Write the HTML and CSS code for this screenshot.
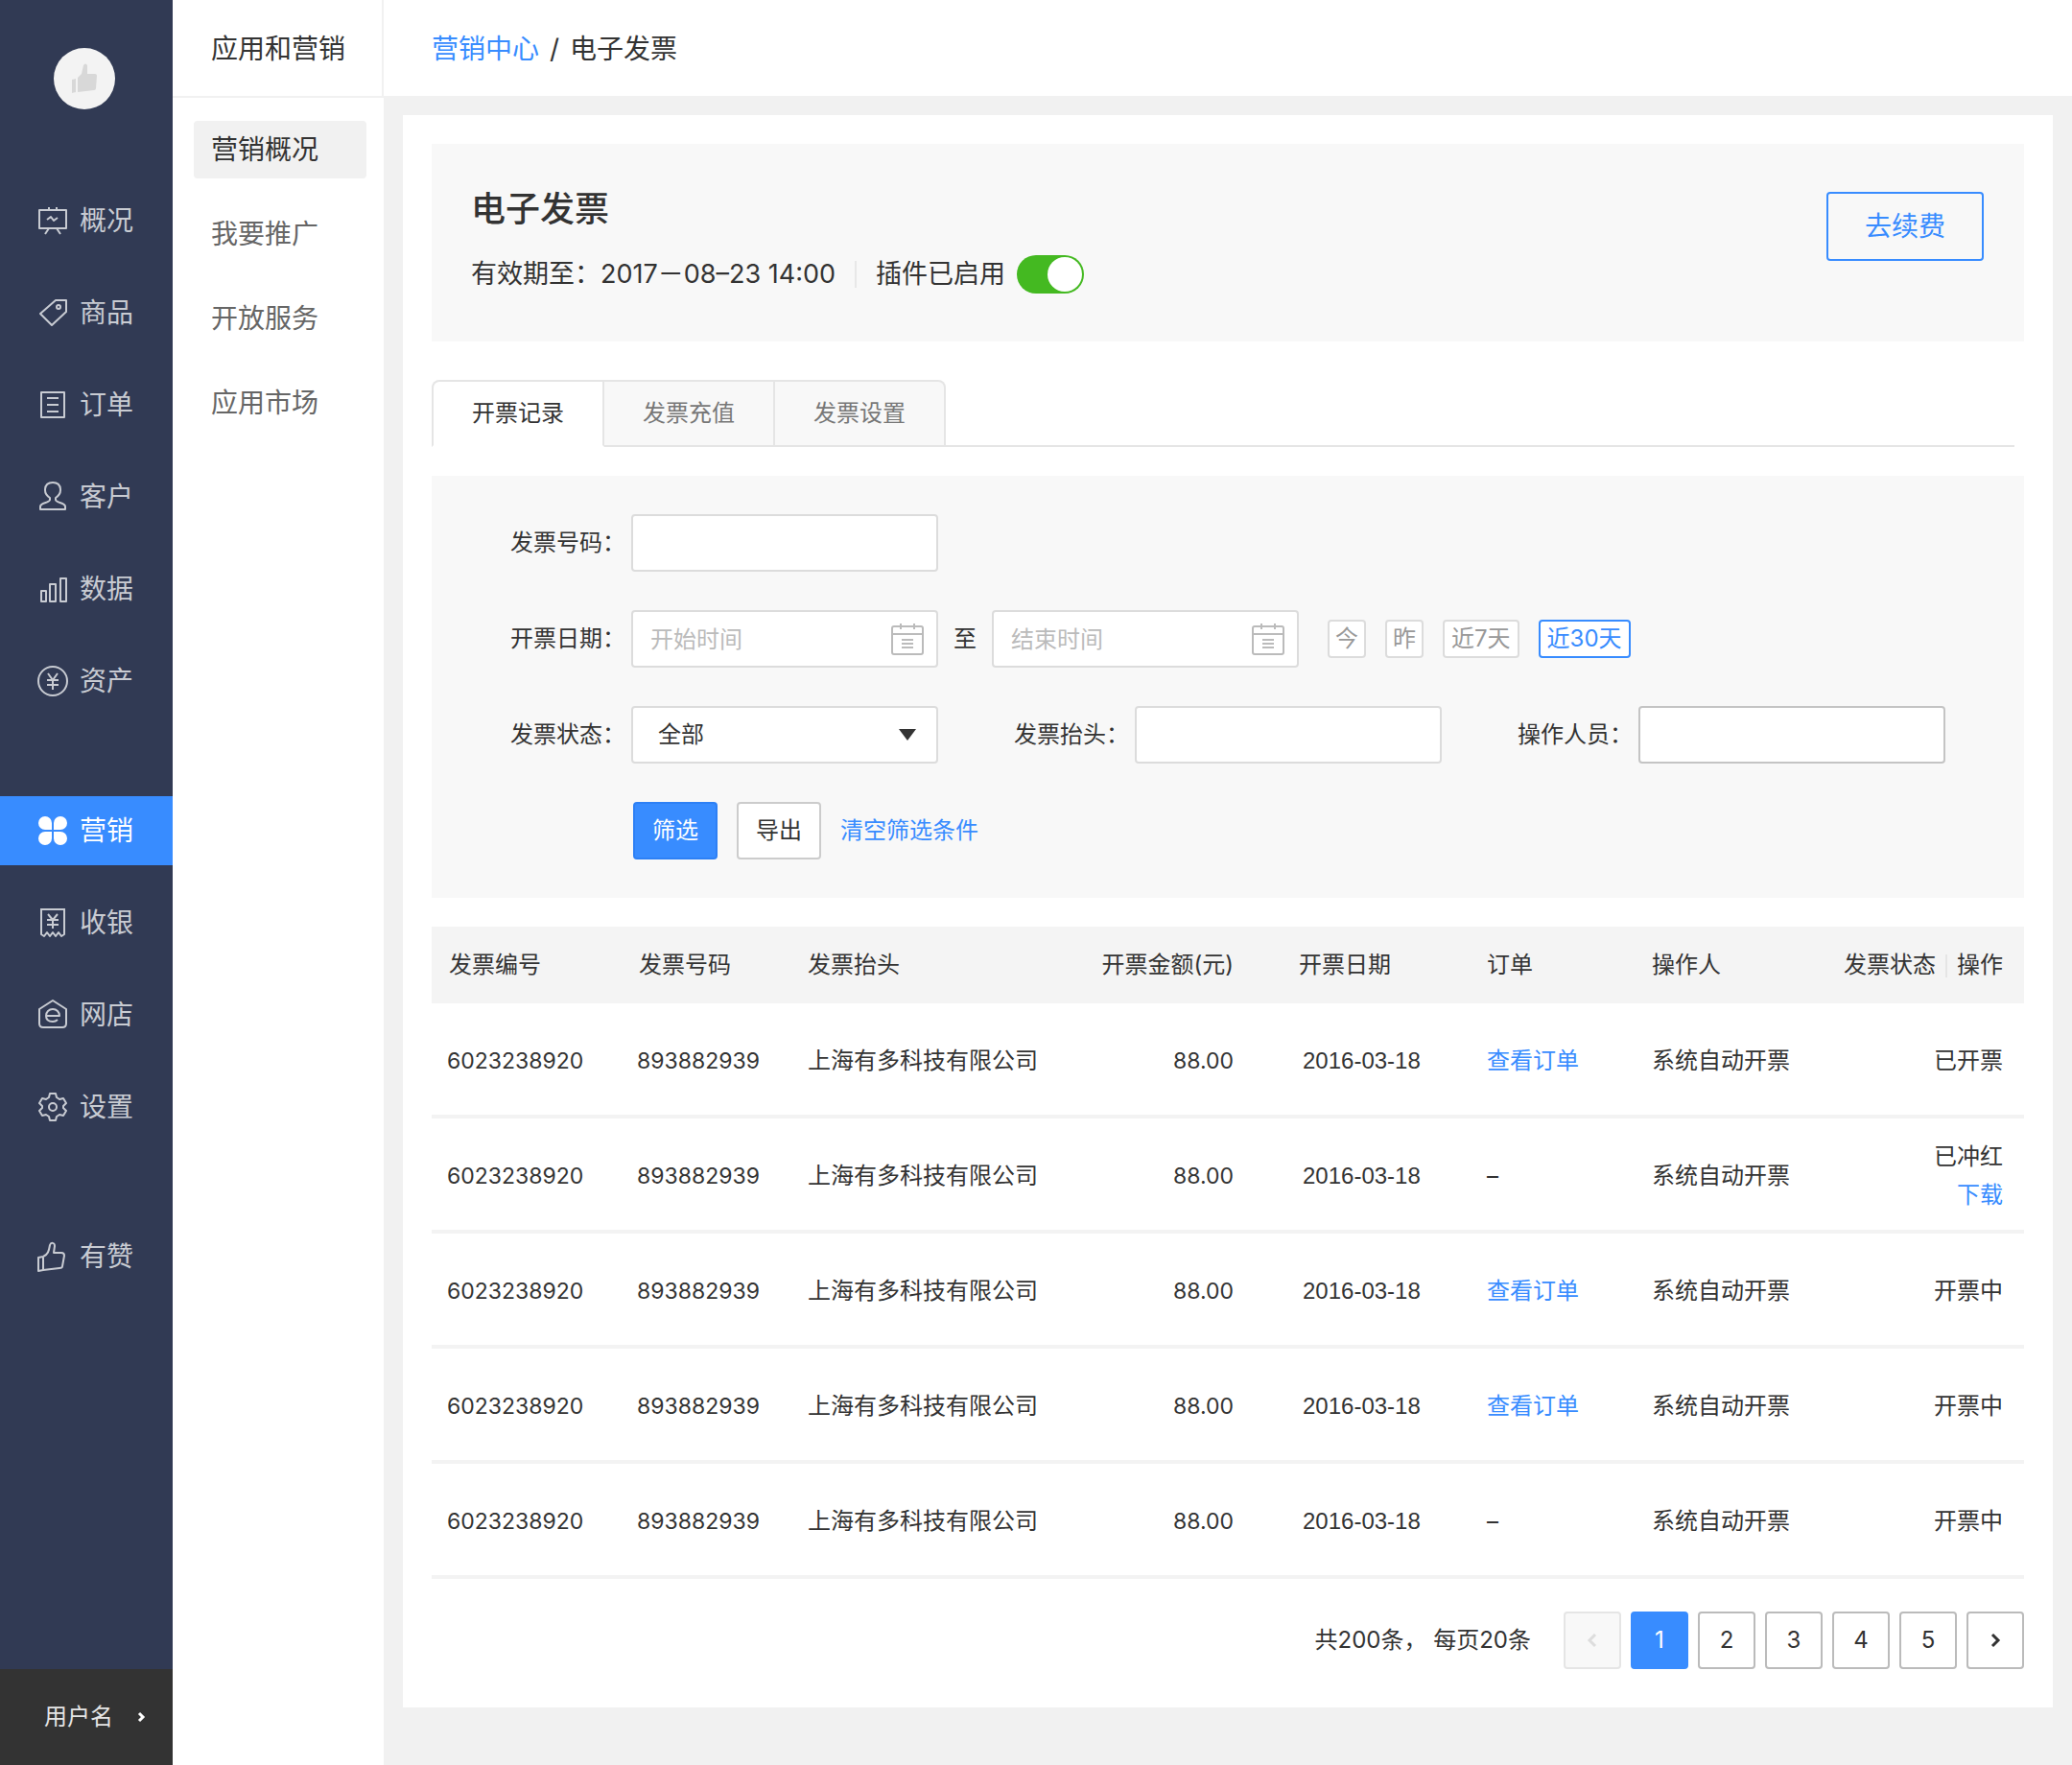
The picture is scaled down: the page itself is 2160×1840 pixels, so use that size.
FILE: index.html
```html
<!DOCTYPE html>
<html lang="zh-CN">
<head>
  <meta charset="UTF-8" />
  <meta name="viewport" content="width=device-width, initial-scale=1.0"/>
  <title>电子发票</title>
  <link rel="stylesheet" href="styles.css">
</head>
<body>
  <div class="layout">
    <aside class="sidebar">
      <div class="logo">
        <svg width="32" height="36" viewBox="0 0 32 36" fill="#d8d8d8">
          <path d="M3 19l4-1v14l-4 1z"/>
          <path d="M9 17l4-4 2-9q2-3 4 0v9h8q2 0 2 2l-1 13q0 2-2 2L9 32z"/>
        </svg>
      </div>
      <nav class="nav">
        <a href="#">
          <svg class="icon" viewBox="0 0 32 32"><path d="M2 5h28v19H2zM12 5V2M20 5V2M12 24l-4 6M20 24l4 6M10 15l4-3 3 4 4-3"/></svg>
          概况
        </a>
        <a href="#">
          <svg class="icon" viewBox="0 0 32 32"><path d="M19 3h11v12L15 29 3 17z"/><circle cx="22" cy="10" r="2"/></svg>
          商品
        </a>
        <a href="#">
          <svg class="icon" viewBox="0 0 32 32"><path d="M4 3h24v26H4zM10 9h12M10 16h12M10 23h12"/></svg>
          订单
        </a>
        <a href="#">
          <svg class="icon" viewBox="0 0 32 32"><path d="M13 19v-2c-3-2-5-5-5-8 0-5 3-8 8-8s8 3 8 8c0 3-2 6-5 8v2c0 3 10 3 10 7v3H3v-3c0-4 10-4 10-7z"/></svg>
          客户
        </a>
        <a href="#">
          <svg class="icon" viewBox="0 0 32 32"><path d="M4 18h5v11H4zM13 11h6v18h-6zM24 5h6v24h-6z"/></svg>
          数据
        </a>
        <a href="#">
          <svg class="icon" viewBox="0 0 32 32"><circle cx="16" cy="16" r="15"/><path d="M11 8l5 7 5-7M10 15h12M10 20h12M16 15v10"/></svg>
          资产
        </a>
        <a href="#" class="active group-start">
          <svg class="icon icon-solid" viewBox="0 0 32 32"><path d="M15 15H8a7 7 0 1 1 7-7zM17 15V8a7 7 0 1 1 7 7zM15 17v7a7 7 0 1 1-7-7zM17 17h7a7 7 0 1 1-7 7z"/></svg>
          营销
        </a>
        <a href="#">
          <svg class="icon" viewBox="0 0 32 32"><path d="M3 2h26M4 2v26l3 2 3-4 3 4 3-4 3 4 3-4 3 4 3-2V2M11 7l5 6 5-6M10 13h12M10 18h12M16 13v9"/></svg>
          收银
        </a>
        <a href="#">
          <svg class="icon" viewBox="0 0 32 32"><path d="M16 1l14 9v15q0 4-4 4H6q-4 0-4-4V10z"/><path d="M10 17h13c0-4-3-7-7-7s-7 3-7 7 3 6 7 6c3 0 4-1 5-2"/></svg>
          网店
        </a>
        <a href="#">
          <svg class="icon" viewBox="0 0 32 32"><circle cx="16" cy="16" r="4"/><path d="M13 2h6l1 4 3 2 4-1 3 5-3 3v2l3 3-3 5-4-1-3 2-1 4h-6l-1-4-3-2-4 1-3-5 3-3v-2l-3-3 3-5 4 1 3-2z"/></svg>
          设置
        </a>
        <a href="#" class="group-start">
          <svg class="icon" viewBox="0 0 32 32"><path d="M1 17l5-1v14l-5 1zM6 16c5-2 6-6 7-12 1-3 5-3 5 1l-1 7h8q3 0 3 3l-2 11q0 2-3 2L6 30"/></svg>
          有赞
        </a>
      </nav>
      <a href="#" class="user">
        用户名
        <svg width="10" height="12" viewBox="0 0 10 12"><path d="M3 2l4 4-4 4"/></svg>
      </a>
    </aside>

    <aside class="submenu">
      <div class="submenu-title">应用和营销</div>
      <nav class="submenu-list">
        <a href="#" class="active">营销概况</a>
        <a href="#">我要推广</a>
        <a href="#">开放服务</a>
        <a href="#">应用市场</a>
      </nav>
    </aside>

    <div class="content">
      <header class="topbar">
        <a href="#">营销中心</a><span class="slash">/</span><span>电子发票</span>
      </header>

      <main class="card">
        <section class="banner">
          <div>
            <h1>电子发票</h1>
            <div class="banner-info">
              <span>有效期至：2017－08–23 14:00</span>
              <label class="plugin">
                插件已启用
                <input type="checkbox" class="switch" checked />
              </label>
            </div>
          </div>
          <button type="button" class="btn-renew">去续费</button>
        </section>

        <div class="tabs">
          <button type="button" class="active">开票记录</button>
          <button type="button">发票充值</button>
          <button type="button">发票设置</button>
        </div>

        <form class="filter">
          <div class="row">
            <div class="field">
              <label for="number">发票号码：</label>
              <input type="text" id="number" />
            </div>
          </div>
          <div class="row dates">
            <div class="field">
              <label for="start">开票日期：</label>
              <div class="date">
                <input type="text" id="start" placeholder="开始时间" />
                <svg viewBox="0 0 34 34"><path d="M3 4h28q2 0 2 2v25q0 2-2 2H3q-2 0-2-2V6q0-2 2-2zM1 12h32M10 1v6M24 1v6M11 18h12M11 22h12M11 26h12"/></svg>
              </div>
              <label for="end" class="to">至</label>
              <div class="date">
                <input type="text" id="end" placeholder="结束时间" />
                <svg viewBox="0 0 34 34"><path d="M3 4h28q2 0 2 2v25q0 2-2 2H3q-2 0-2-2V6q0-2 2-2zM1 12h32M10 1v6M24 1v6M11 18h12M11 22h12M11 26h12"/></svg>
              </div>
            </div>
            <div class="quick">
              <button type="button">今</button>
              <button type="button">昨</button>
              <button type="button" class="wide">近7天</button>
              <button type="button" class="wide active">近30天</button>
            </div>
          </div>
          <div class="row">
            <div class="field">
              <label for="status">发票状态：</label>
              <div class="select">
                <select id="status">
                  <option>全部</option>
                  <option>已开票</option>
                  <option>已冲红</option>
                  <option>开票中</option>
                </select>
                <svg viewBox="0 0 20 14"><path d="M1 1h18l-9 12z"/></svg>
              </div>
            </div>
            <div class="field">
              <label for="title">发票抬头：</label>
              <input type="text" id="title" />
            </div>
            <div class="field">
              <label for="operator">操作人员：</label>
              <input type="text" id="operator" class="dark" />
            </div>
          </div>
          <div class="row actions">
            <button type="submit" class="btn primary">筛选</button>
            <button type="button" class="btn">导出</button>
            <a href="#">清空筛选条件</a>
          </div>
        </form>

        <table class="records">
          <thead>
            <tr>
              <th class="c-id">发票编号</th>
              <th class="c-number">发票号码</th>
              <th>发票抬头</th>
              <th class="c-amount">开票金额(元)</th>
              <th class="c-date">开票日期</th>
              <th class="c-order">订单</th>
              <th class="c-operator">操作人</th>
              <th class="c-status">发票状态<span class="sep"></span>操作</th>
            </tr>
          </thead>
          <tbody>
            <tr>
              <td class="c-id">6023238920</td>
              <td class="c-number">893882939</td>
              <td>上海有多科技有限公司</td>
              <td class="c-amount">88.00</td>
              <td class="c-date">2016-03-18</td>
              <td><a href="#">查看订单</a></td>
              <td>系统自动开票</td>
              <td class="c-status">已开票</td>
            </tr>
            <tr>
              <td class="c-id">6023238920</td>
              <td class="c-number">893882939</td>
              <td>上海有多科技有限公司</td>
              <td class="c-amount">88.00</td>
              <td class="c-date">2016-03-18</td>
              <td>–</td>
              <td>系统自动开票</td>
              <td class="c-status">已冲红<br><a href="#">下载</a></td>
            </tr>
            <tr>
              <td class="c-id">6023238920</td>
              <td class="c-number">893882939</td>
              <td>上海有多科技有限公司</td>
              <td class="c-amount">88.00</td>
              <td class="c-date">2016-03-18</td>
              <td><a href="#">查看订单</a></td>
              <td>系统自动开票</td>
              <td class="c-status">开票中</td>
            </tr>
            <tr>
              <td class="c-id">6023238920</td>
              <td class="c-number">893882939</td>
              <td>上海有多科技有限公司</td>
              <td class="c-amount">88.00</td>
              <td class="c-date">2016-03-18</td>
              <td><a href="#">查看订单</a></td>
              <td>系统自动开票</td>
              <td class="c-status">开票中</td>
            </tr>
            <tr>
              <td class="c-id">6023238920</td>
              <td class="c-number">893882939</td>
              <td>上海有多科技有限公司</td>
              <td class="c-amount">88.00</td>
              <td class="c-date">2016-03-18</td>
              <td>–</td>
              <td>系统自动开票</td>
              <td class="c-status">开票中</td>
            </tr>
          </tbody>
        </table>

        <div class="pagination">
          <span class="total">共200条， 每页20条</span>
          <button type="button" disabled aria-label="上一页">
            <svg width="12" height="16" viewBox="0 0 12 16"><path d="M9 2L3 8l6 6"/></svg>
          </button>
          <button type="button" class="active">1</button>
          <button type="button">2</button>
          <button type="button">3</button>
          <button type="button">4</button>
          <button type="button">5</button>
          <button type="button" aria-label="下一页">
            <svg width="12" height="16" viewBox="0 0 12 16"><path d="M3 2l6 6-6 6"/></svg>
          </button>
        </div>
      </main>
    </div>
  </div>
</body>
</html>
```

FILE: styles.css
```css
* {
  box-sizing: border-box;
}

body {
  margin: 0;
  background: #f1f1f1;
  color: #333;
  font-family: Inter, "Noto Sans CJK SC", sans-serif;
  font-size: 24px;
  line-height: 40px;
}

a {
  color: #388cff;
  text-decoration: none;
}

button, input, select {
  font: inherit;
  color: inherit;
}

button {
  padding: 0;
  cursor: pointer;
}

.layout {
  display: flex;
  min-height: 100vh;
}

/* 左侧主导航 */
.sidebar {
  width: 180px;
  flex-shrink: 0;
  display: flex;
  flex-direction: column;
  background: #313a54;
}

.logo {
  width: 64px;
  height: 64px;
  margin: 50px 0 80px 56px;
  border-radius: 50%;
  background: #f3f3f3;
  display: flex;
  align-items: center;
  justify-content: center;
}

.nav {
  flex: 1;
  display: flex;
  flex-direction: column;
  gap: 24px;
}

.nav a {
  height: 72px;
  padding-left: 39px;
  display: flex;
  align-items: center;
  gap: 12px;
  font-size: 28px;
  color: #c8cbd2;
}

.nav .group-start {
  margin-top: 60px;
}

.nav a.active {
  background: #388cff;
  color: #fff;
}

.icon {
  width: 32px;
  height: 32px;
  fill: none;
  stroke: currentColor;
  stroke-width: 2;
  stroke-linejoin: round;
  overflow: visible;
}

.icon-solid {
  fill: currentColor;
  stroke: none;
}

.user {
  height: 100px;
  padding-left: 46px;
  display: flex;
  align-items: center;
  gap: 24px;
  background: #333;
  color: #e5e5e5;
}

.user svg {
  fill: none;
  stroke: #fff;
  stroke-width: 3;
}

/* 二级菜单 */
.submenu {
  width: 220px;
  flex-shrink: 0;
  background: #fff;
  font-size: 28px;
}

.submenu-title {
  height: 102px;
  padding: 31px 0 0 40px;
  border-right: 2px solid #f1f1f1;
  border-bottom: 2px solid #f1f1f1;
}

.submenu-list {
  padding: 24px 18px 0 22px;
  display: flex;
  flex-direction: column;
  gap: 28px;
}

.submenu-list a {
  height: 60px;
  padding-left: 18px;
  border-radius: 4px;
  line-height: 60px;
  color: #666;
}

.submenu-list a.active {
  background: #f1f1f1;
  color: #333;
}

/* 内容区 */
.content {
  flex: 1;
  min-width: 0;
}

.topbar {
  height: 100px;
  padding: 31px 50px;
  background: #fff;
  font-size: 28px;
}

.slash {
  margin: 0 11px;
}

.card {
  margin: 20px;
  padding: 30px 30px 40px;
  background: #fff;
}

.banner {
  padding: 50px 42px 50px 41px;
  display: flex;
  align-items: flex-start;
  justify-content: space-between;
  background: #f8f8f8;
}

.banner h1 {
  margin: 0;
  font-size: 36px;
  font-weight: 500;
  line-height: 36px;
}

.banner-info {
  display: flex;
  align-items: center;
  margin-top: 30px;
  font-size: 27px;
}

.plugin {
  display: flex;
  align-items: center;
  gap: 12px;
  margin-left: 20px;
  padding-left: 22px;
  background: linear-gradient(#e8e8e8, #e8e8e8) left / 2px 28px no-repeat;
}

.switch {
  appearance: none;
  width: 70px;
  height: 40px;
  margin: 0;
  padding: 2px;
  border-radius: 20px;
  background: #ccc;
}

.switch::before {
  content: "";
  display: block;
  width: 36px;
  height: 36px;
  border-radius: 50%;
  background: #fff;
}

.switch:checked {
  background: #44b921;
}

.switch:checked::before {
  margin-left: 30px;
}

.btn-renew {
  width: 164px;
  height: 72px;
  border: 2px solid #388cff;
  border-radius: 4px;
  background: none;
  color: #388cff;
  font-size: 28px;
}

/* 标签页 */
.tabs {
  margin: 40px 10px 30px 0;
  display: flex;
  background: linear-gradient(#e5e5e5, #e5e5e5) bottom / 100% 2px no-repeat;
}

.tabs button {
  height: 70px;
  padding: 0 40px;
  border: 2px solid #e5e5e5;
  border-left: 0;
  background: #f8f8f8;
  color: #777;
}

.tabs button:first-child {
  border-left: 2px solid #e5e5e5;
  border-top-left-radius: 8px;
}

.tabs button:last-child {
  border-top-right-radius: 8px;
}

.tabs button.active {
  border-bottom-color: #fff;
  background: #fff;
  color: #333;
}

/* 筛选条件 */
.filter {
  padding: 40px 82px;
  display: flex;
  flex-direction: column;
  gap: 40px;
  background: #f8f8f8;
}

.row {
  display: flex;
  align-items: center;
  gap: 79px;
}

.row.dates {
  gap: 30px;
}

.field {
  display: flex;
  align-items: center;
}

.field label {
  width: 126px;
}

.field input, .field select {
  display: block;
  width: 320px;
  height: 60px;
  padding: 0 20px;
  border: 2px solid #dcdcdc;
  border-radius: 4px;
  background: #fff;
}

.field input.dark {
  border-color: #c4c4c4;
}

.field input::placeholder {
  color: #bbb;
  opacity: 1;
}

.field .to {
  width: auto;
  margin: 0 16px;
}

.field .date input {
  padding: 0 18px;
}

.date, .select {
  position: relative;
}

.date svg {
  position: absolute;
  top: 13px;
  right: 15px;
  width: 34px;
  height: 34px;
  fill: none;
  stroke: #bbb;
  stroke-width: 2;
  pointer-events: none;
}

.field select {
  appearance: none;
  padding: 0 26px;
}

.select svg {
  position: absolute;
  top: 23px;
  right: 22px;
  width: 20px;
  height: 14px;
  fill: #333;
  pointer-events: none;
}

.quick {
  display: flex;
  gap: 20px;
}

.quick button {
  height: 40px;
  padding: 0 6px;
  border: 2px solid #dcdcdc;
  border-radius: 4px;
  background: #fff;
  color: #999;
  line-height: 36px;
}

.quick button.wide {
  padding: 0 7px;
}

.quick button.active {
  border-color: #388cff;
  color: #388cff;
}

.actions {
  gap: 20px;
  padding-left: 128px;
}

.btn {
  width: 88px;
  height: 60px;
  border: 2px solid #ccc;
  border-radius: 4px;
  background: #fff;
}

.btn.primary {
  border-color: #2d80f5;
  background: #388cff;
  color: #fff;
}

/* 开票记录 */
.records {
  width: 100%;
  margin-top: 30px;
  border-spacing: 0;
  table-layout: fixed;
}

.records th {
  height: 80px;
  padding: 0 18px;
  background: #f4f4f4;
  font-weight: 400;
  text-align: left;
}

.records td {
  height: 120px;
  padding: 4px 16px 0 18px;
  border-bottom: 4px solid #f3f3f3;
}

.c-id {
  width: 198px;
}

.c-number {
  width: 176px;
}

.records td.c-id, .records td.c-number {
  padding-left: 16px;
  font-size: 23px;
}

.records .c-amount {
  width: 214px;
  padding-right: 50px;
  text-align: right;
}

.records td.c-amount {
  font-size: 23px;
}

.c-date {
  width: 196px;
}

.records td.c-date {
  padding-left: 22px;
  font-family: "Liberation Sans", "Noto Sans CJK SC", sans-serif;
}

.c-order {
  width: 172px;
}

.c-operator {
  width: 192px;
}

.records .c-status {
  width: 214px;
  padding-right: 22px;
  text-align: right;
}

.sep {
  display: inline-block;
  width: 2px;
  height: 24px;
  margin: 0 10px;
  background: #e5e5e5;
  vertical-align: middle;
}

/* 分页 */
.pagination {
  margin-top: 34px;
  display: flex;
  align-items: center;
  justify-content: flex-end;
  gap: 10px;
}

.total {
  margin-right: 24px;
}

.pagination button {
  width: 60px;
  height: 60px;
  border: 2px solid #bbb;
  border-radius: 4px;
  background: #fff;
}

.pagination button.active {
  border-color: #388cff;
  background: #388cff;
  color: #fff;
}

.pagination button:disabled {
  border-color: #e5e5e5;
  background: #f8f8f8;
  color: #ddd;
}

.pagination svg {
  fill: none;
  stroke: currentColor;
  stroke-width: 3;
}
```
